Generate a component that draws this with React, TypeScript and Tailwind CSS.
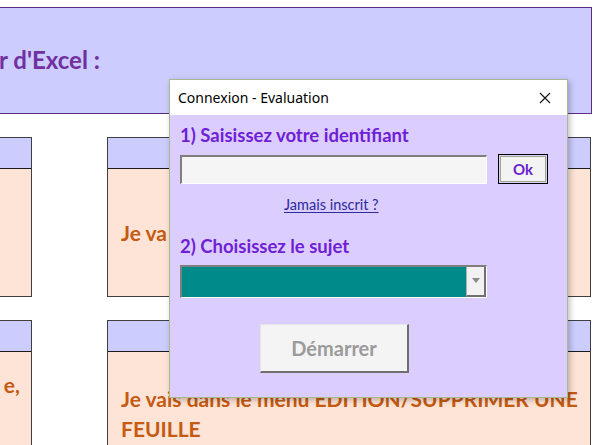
import React from 'react';

const sheetFont = { fontFamily: 'Lato, "Open Sans", sans-serif' };

function Card({ width, bodyHeight, children }: { width: string; bodyHeight: string; children?: React.ReactNode }) {
    return (
        <div className={`${width} flex flex-col border border-[#3f3f3f] shrink-0`}>
            <div className="h-[31px] bg-[#ccccff] border-b border-[#1a1a1a]" />
            <div className={`${bodyHeight} bg-[#fde4d6] overflow-hidden`}>{children}</div>
        </div>
    );
}

export default function App() {
    return (
        <div className="relative w-[600px] h-[445px] overflow-hidden bg-white" style={sheetFont}>
            {/* sheet background */}
            <div className="pt-[7px]">
                <div className="h-[107px] w-[592px] bg-[#ccccff] border border-[#5c2d86] border-l-0 flex items-center">
                    <span className="text-[24px] font-bold text-[#7030a0] -ml-[1px] mt-[-2px]">r d'Excel :</span>
                </div>

                <div className="mt-[23px] flex gap-[75px] -ml-[1px]">
                    <Card width="w-[33px]" bodyHeight="h-[127px]" />
                    <Card width="w-[484px]" bodyHeight="h-[127px]">
                        <div className="pl-[13px] pt-[48px] text-[21px] font-bold text-[#c55a11] whitespace-nowrap">Je va</div>
                    </Card>
                </div>

                <div className="mt-[23px] flex gap-[75px] -ml-[1px]">
                    <Card width="w-[33px]" bodyHeight="h-[100px]">
                        <div className="flex justify-end pr-[11px] pt-[17px] text-[21px] font-bold text-[#c55a11]">e,</div>
                    </Card>
                    <Card width="w-[484px]" bodyHeight="h-[100px]">
                        <div className="pl-[13px] pt-[32px] text-[21px] leading-[30px] font-bold text-[#c55a11]">
                            Je vais dans le menu EDITION/SUPPRIMER UNE FEUILLE
                        </div>
                    </Card>
                </div>
            </div>

            {/* dialog window */}
            <div className="absolute left-[169px] top-[79px] w-[399px] h-[319px] border border-[#a9b98e] bg-[#dccdff] shadow-[2px_2px_6px_rgba(0,0,0,0.25)] flex flex-col">
                <div className="h-[35px] bg-white flex items-center justify-between pl-[8px] pr-[14px]">
                    <span className="text-[14px] text-black" style={{ fontFamily: '"Noto Sans", "Open Sans", sans-serif' }}>Connexion - Evaluation</span>
                    <svg width="12" height="12" viewBox="0 0 12 12" className="mr-[2px]">
                        <path d="M1 1 L11 11 M11 1 L1 11" stroke="#111" strokeWidth="1.1" />
                    </svg>
                </div>

                <div className="flex flex-col pl-[10px]">
                    <div className="mt-[8px] text-[18.5px] font-bold text-[#6e20d6] leading-[24px]">1) Saisissez votre identifiant</div>

                    <div className="mt-[7px] flex items-center gap-[11px]">
                        <div className="w-[307px] h-[29px] bg-[#f5f5f5] border-t-2 border-l-2 border-[#7f7f7f] border-r border-b border-r-white border-b-white" />
                        <div className="w-[50px] h-[30px] border border-black p-[1px]">
                            <div className="w-full h-full bg-[#f3f3f3] border border-[#a0a890] flex items-center justify-center text-[15px] font-bold text-[#6a1fcf]">Ok</div>
                        </div>
                    </div>

                    <div className="mt-[10px] flex">
                        <span className="ml-[104px] text-[14.5px] text-[#2b2b9e] underline underline-offset-2">Jamais inscrit ?</span>
                    </div>

                    <div className="mt-[18px] text-[18.5px] font-bold text-[#6e20d6] leading-[24px]">2) Choisissez le sujet</div>

                    <div className="mt-[7px] w-[307px] h-[33px] border-t-2 border-l-2 border-[#7f7f7f] border-r border-b border-r-white border-b-white bg-[#008b8a] flex justify-end">
                        <div className="w-[20px] h-full bg-[#f2f2f2] border-l border-[#b0b0b0] border-r-2 border-b-2 border-r-[#6f6f6f] border-b-[#6f6f6f] flex items-center justify-center">
                            <svg width="8" height="5" viewBox="0 0 8 5">
                                <path d="M0 0 L8 0 L4 5 Z" fill="#8a8a8a" />
                            </svg>
                        </div>
                    </div>

                    <div className="mt-[26px] ml-[80px] w-[149px] h-[49px] bg-[#f4f4f4] border-t border-l border-[#e6e6e6] border-r-2 border-b-2 border-r-[#6e6e6e] border-b-[#6e6e6e] flex items-center justify-center">
                        <span className="text-[20px] font-bold text-[#9b9b9b]">Démarrer</span>
                    </div>
                </div>
            </div>
        </div>
    );
}
